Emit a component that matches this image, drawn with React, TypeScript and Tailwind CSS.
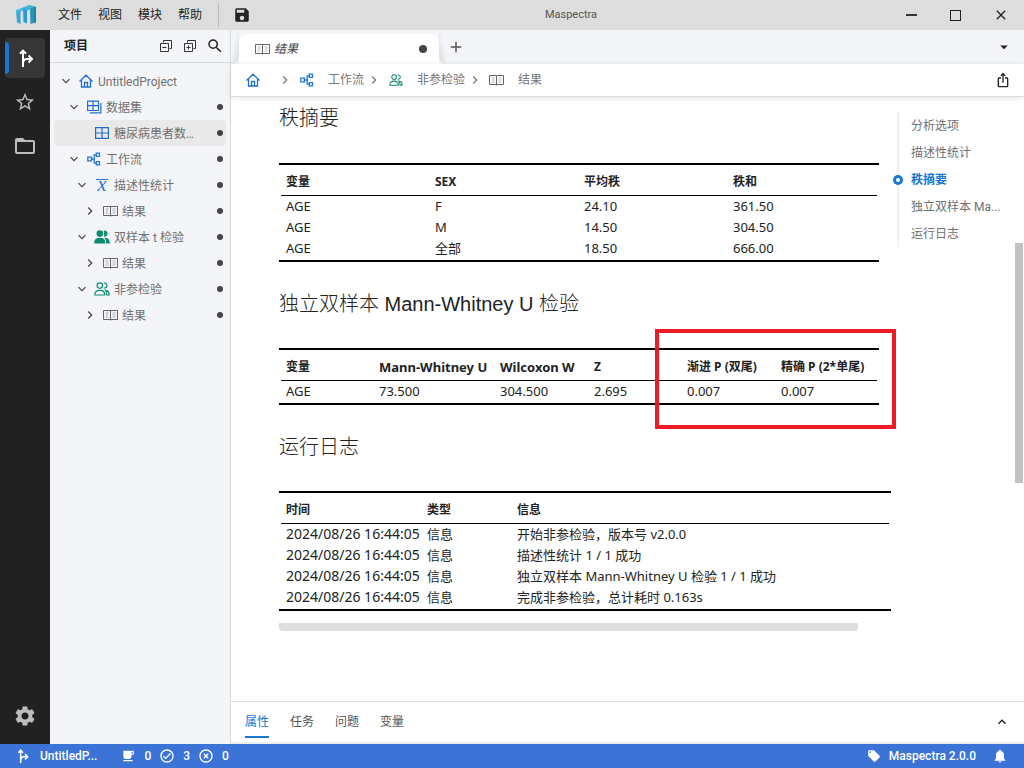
import type { ReactNode } from "react";
import {
  MdArrowDropDown, MdAdd, MdClose, MdExpandLess, MdFolderOpen, MdFreeBreakfast, MdHighlightOff,
  MdIosShare, MdLocalOffer, MdNotifications, MdOutlineCheckCircle, MdSave, MdSearch, MdSettings, MdStarBorder,
} from "react-icons/md";

function Logo() {
  return (
    <svg viewBox="0 0 20 20" className="h-5 w-5">
      <path d="M0 5l4.500 1.200V19L1 17.500z" fill="#35a9dc" />
      <path d="M0 5l7-2.500 4 1.200L4.500 6.800z" fill="#4cbce4" />
      <path d="M7 2.500l4 1.500v14.500L7.500 17z" fill="#2b9bd0" />
      <path d="M7 2.500L13.500 0 19 1.500l-8 4.500z" fill="#43b4d8" />
      <path d="M14 3.500l5-2v16L14.500 19z" fill="#2596b8" />
      <path d="M18.300 1.300l1.700.900v15.300l-1.700 1z" fill="#1d7f9c" />
    </svg>
  );
}

function Branch({ className }: { className: string }) {
  return (
    <svg viewBox="0 0 16 18" className={className} fill="none" stroke="currentColor" strokeWidth="2">
      <path d="M5 18V2M2 4.800L5 1.600l3 3.200M10.500 6.500L14 10l-3.500 3.500" />
      <path d="M5 14.500c0-3 1.500-4.500 4-4.500h4.500" />
    </svg>
  );
}

function House() {
  return (
    <svg viewBox="0 0 14 14" className="h-[14px] w-[14px] shrink-0" fill="none" stroke="#1f6fd0" strokeWidth="1.300">
      <path d="M.5 7.500L7 1.200l6.500 6.300M2.500 6v7h9V6M5.500 13V8.500h3V13" />
    </svg>
  );
}

function Book() {
  return (
    <svg viewBox="0 0 15 12" className="h-3 w-[15px] shrink-0" fill="none" stroke="#666" strokeWidth="1">
      <path d="M7.500 1.500H14.500V10.500H.5V1.500zM7.500 1.500v10" />
      <path d="M2.500 4h3M2.500 6h3M2.500 8h3M9.500 4h3M9.500 6h3M9.500 8h3" opacity=".45" />
    </svg>
  );
}

function Grid() {
  return (
    <svg viewBox="0 0 14 12" className="h-3 w-[14px] shrink-0" fill="none" stroke="#1f6fd0" strokeWidth="1.200">
      <path d="M.6.600h12.800v10.800H.6zM7 .6v10.800M.6 6h12.800" />
    </svg>
  );
}

function Grids() {
  return (
    <svg viewBox="0 0 15 14" className="h-[14px] w-[15px] shrink-0" fill="none" stroke="#1f6fd0" strokeWidth="1.200">
      <path d="M.6 1.100h10.900v9.400H.6zM6 1.100v9.400M.6 5.700h10.900M13.900 3v9.900H3" />
    </svg>
  );
}

function Flow() {
  return (
    <svg viewBox="0 0 14 14" className="h-[14px] w-[14px] shrink-0" fill="none" stroke="#1f76d4" strokeWidth="1.300">
      <path d="M.8 5.200h3.600v3.600H.8zM9.300 1.200h3.200v3.200H9.300zM9.300 9.600h3.200v3.200H9.300zM4.400 7h2.800M9.300 2.800H7.200v8.400h2.100" />
    </svg>
  );
}

function People({ solid, className }: { solid?: boolean; className: string }) {
  return (
    <svg viewBox="0 0 16 14" className={"shrink-0 text-[#0f8a72] " + className} fill={solid ? "currentColor" : "none"} stroke="currentColor" strokeWidth="1.200">
      <circle cx="5.800" cy="3.600" r="2.700" />
      <path d="M.8 13c0-3 1.700-4.700 5-4.700s5 1.700 5 4.700z" />
      <path d="M9.800 1.300a2.400 2.400 0 1 1 .2 4.600M11.500 8.300c2.400.300 3.700 2 3.700 4.700h-2.400c0-2-.5-3.600-1.300-4.700z" />
    </svg>
  );
}

function MeanSign() {
  return (
    <span className="flex h-3 w-3 shrink-0 items-center justify-center border-t border-[#1f76d4] pb-1 font-[Liberation_Serif,serif] text-xl leading-3 text-[#1f76d4] italic">
      x
    </span>
  );
}

function Chevron({ open, className = "" }: { open?: boolean; className?: string }) {
  return (
    <svg viewBox="0 0 10 10" className={"h-[10px] w-[10px] shrink-0 " + className} fill="none" stroke="currentColor" strokeWidth="1.200">
      <path d={open ? "M1.500 3.200L5 6.700l3.500-3.500" : "M3.200 1.500L6.700 5 3.200 8.500"} />
    </svg>
  );
}

function Windows({ plus }: { plus?: boolean }) {
  return (
    <svg viewBox="0 0 14 14" className="h-[14px] w-[14px]" fill="none" stroke="#333">
      <path d="M4.500 3.500v-2h8v8h-2M1.500 4.500h8v8h-8zM3.500 8.500h4" />
      {plus && <path d="M5.500 6.500v4" />}
    </svg>
  );
}

type Node = { label: string; icon: ReactNode; indent: string; open?: boolean; leaf?: boolean; selected?: boolean; clean?: boolean };

const nodes: Node[] = [
  { label: "UntitledProject", icon: <House />, indent: "pl-[7px]", open: true, clean: true },
  { label: "数据集", icon: <Grids />, indent: "pl-[15px]", open: true },
  { label: "糖尿病患者数据集", icon: <Grid />, indent: "pl-[23px]", leaf: true, selected: true },
  { label: "工作流", icon: <Flow />, indent: "pl-[15px]", open: true },
  { label: "描述性统计", icon: <MeanSign />, indent: "pl-[23px]", open: true },
  { label: "结果", icon: <Book />, indent: "pl-[31px]" },
  { label: "双样本 t 检验", icon: <People solid className="h-[14px] w-4" />, indent: "pl-[23px]", open: true },
  { label: "结果", icon: <Book />, indent: "pl-[31px]" },
  { label: "非参检验", icon: <People className="h-[14px] w-4" />, indent: "pl-[23px]", open: true },
  { label: "结果", icon: <Book />, indent: "pl-[31px]" },
];

function Sidebar() {
  return (
    <aside className="flex w-[181px] shrink-0 flex-col border-r border-[#d9dadc] bg-[#f4f5f8]">
      <header className="flex h-[33px] shrink-0 items-center gap-[10px] border-b border-[#d5d7da] pr-[6px] pl-[14px]">
        <h2 className="mr-auto text-xs font-bold text-[#222]">项目</h2>
        <button aria-label="全部折叠"><Windows /></button>
        <button aria-label="全部展开"><Windows plus /></button>
        <button aria-label="搜索" className="-ml-[1px]"><MdSearch className="h-[18px] w-[18px] text-[#222]" /></button>
      </header>
      <ul className="px-1 pt-[5px]">
        {nodes.map((n, i) => (
          <li key={i} className={"flex h-[26px] items-center rounded pr-[3px] " + n.indent + (n.selected ? " bg-[#e9e9e9]" : "")}>
            {n.leaf ? null : <Chevron open={n.open} className="text-[#444]" />}
            <span className={"flex w-4 shrink-0 items-center justify-center " + (n.leaf ? "ml-[17px]" : "ml-[7px]")}>{n.icon}</span>
            <span className="ml-1 min-w-0 flex-1 truncate pt-[2px] pr-5 text-xs text-[#707070]">{n.label}</span>
            {!n.clean && <span className="h-[6px] w-[6px] shrink-0 rounded-full bg-[#444]" />}
          </li>
        ))}
      </ul>
    </aside>
  );
}

const isLatinName = (s: string) => /^[A-Z][a-z]+/.test(s);
const isTimestamp = (s: string) => /^\d{4}\//.test(s);

function ResultTable({ head, rows, cols, className }: { head: string[]; rows: string[][]; cols: string[]; className: string }) {
  return (
    <div className={"border-y-2 border-black px-[2px] pb-[2px] " + className}>
      <table className="w-full table-fixed border-collapse text-left font-['Noto_Sans','Noto_Sans_CJK_SC',sans-serif] text-[#222]">
        <colgroup>{cols.map((c, i) => <col key={i} className={c} />)}</colgroup>
        <thead>
          <tr className="h-[30px] border-b border-black">
            {head.map((h) => (
              <th key={h} className={"pt-1 pl-[5px] leading-4 font-bold whitespace-nowrap " + (isLatinName(h) ? "text-[13px]" : "text-xs")}>{h}</th>
            ))}
          </tr>
        </thead>
        <tbody>
          {rows.map((r, i) => (
            <tr key={i} className="h-[21px]">
              {r.map((c, j) => (
                <td key={j} className={"pl-[5px] leading-5 whitespace-nowrap " + (isTimestamp(c) ? "text-sm" : "text-[13px]")}>{c}</td>
              ))}
            </tr>
          ))}
        </tbody>
      </table>
    </div>
  );
}

function Report() {
  const h = "font-['Liberation_Sans','Noto_Sans_CJK_SC',sans-serif] text-xl leading-6 font-light text-[#222]";
  return (
    <article className="min-w-0 flex-1 pt-[9px] pl-12">
      <h1 className={h}>秩摘要</h1>
      <ResultTable
        className="mt-[33px] w-[600px]"
        cols={["w-1/4", "w-1/4", "w-1/4", "w-1/4"]}
        head={["变量", "SEX", "平均秩", "秩和"]}
        rows={[["AGE", "F", "24.10", "361.50"], ["AGE", "M", "14.50", "304.50"], ["AGE", "全部", "18.50", "666.00"]]}
      />
      <h1 className={"mt-[30px] " + h}>独立双样本 Mann-Whitney U 检验</h1>
      <div className="relative mt-8 w-[600px]">
        <ResultTable
          className="w-full"
          cols={["w-[93px]", "w-[121px]", "w-[94px]", "w-[93px]", "w-[94px]", "w-[101px]"]}
          head={["变量", "Mann-Whitney U", "Wilcoxon W", "Z", "渐进 P (双尾)", "精确 P (2*单尾)"]}
          rows={[["AGE", "73.500", "304.500", "2.695", "0.007", "0.007"]]}
        />
        <div className="absolute -top-[19px] -right-[17px] h-[100px] w-[241px] border-4 border-[#ed1c24]" />
      </div>
      <h1 className={"mt-[30px] " + h}>运行日志</h1>
      <ResultTable
        className="mt-8 w-[612px]"
        cols={["w-[141px]", "w-[90px]", "w-[377px]"]}
        head={["时间", "类型", "信息"]}
        rows={[
          ["2024/08/26 16:44:05", "信息", "开始非参检验，版本号 v2.0.0"],
          ["2024/08/26 16:44:05", "信息", "描述性统计 1 / 1 成功"],
          ["2024/08/26 16:44:05", "信息", "独立双样本 Mann-Whitney U 检验 1 / 1 成功"],
          ["2024/08/26 16:44:05", "信息", "完成非参检验，总计耗时 0.163s"],
        ]}
      />
      <div className="mt-3 h-2 w-[579px] rounded-b-sm bg-[#dedede]" />
    </article>
  );
}

function Outline() {
  const items = ["分析选项", "描述性统计", "秩摘要", "独立双样本 Ma...", "运行日志"];
  return (
    <nav className="mt-[15px] w-[118px] shrink-0 self-start border-l-2 border-[#f0f0f2]">
      {items.map((t, i) => (
        <a key={t} href="#" className={"relative flex h-[27px] items-center pl-3 text-xs whitespace-nowrap " + (i === 2 ? "font-bold text-[#1976d2]" : "text-[#707070]")}>
          {i === 2 && <span className="absolute -left-[6px] h-[10px] w-[10px] rounded-full border-[3px] border-[#1976d2] bg-white" />}
          {t}
        </a>
      ))}
    </nav>
  );
}

export default function App() {
  return (
    <div className="flex h-screen flex-col overflow-hidden bg-white font-['Roboto','Noto_Sans_CJK_SC',sans-serif] text-xs text-[#222]">
      <header className="grid h-[30px] shrink-0 grid-cols-[1fr_auto_1fr] items-center bg-[#ddd]">
        <div className="flex h-full items-center pl-4">
          <Logo />
          <nav className="ml-[22px] flex gap-4">
            {["文件", "视图", "模块", "帮助"].map((m) => <button key={m}>{m}</button>)}
          </nav>
          <span className="ml-4 h-6 w-px bg-[#bbb]" />
          <button aria-label="保存" className="ml-[14px]"><MdSave className="h-[18px] w-[18px]" /></button>
        </div>
        <h1 className="pl-[118px] text-[11px] text-[#555]">Maspectra</h1>
        <div className="flex items-center justify-end gap-[33px] pr-[15px]">
          <button aria-label="最小化" className="h-[2px] w-[11px] bg-[#333]" />
          <button aria-label="最大化" className="h-[11px] w-[11px] border border-[#222]" />
          <button aria-label="关闭" className="-ml-[1px]"><MdClose className="h-4 w-4" /></button>
        </div>
      </header>

      <div className="flex min-h-0 flex-1">
        <nav className="flex w-[50px] shrink-0 flex-col items-center bg-[#212121] pt-2 pb-4 text-[#bdbdbd]">
          <button aria-label="项目" className="flex h-10 w-10 items-center overflow-hidden rounded bg-[#363636] text-white">
            <span className="h-8 w-1 rounded-r bg-[#1976d2]" />
            <Branch className="ml-[9px] h-[18px] w-4" />
          </button>
          <button aria-label="收藏" className="mt-[13px]"><MdStarBorder className="h-[22px] w-[22px]" /></button>
          <button aria-label="文件夹" className="mt-[21px]"><MdFolderOpen className="h-6 w-6" /></button>
          <button aria-label="设置" className="mt-auto"><MdSettings className="h-6 w-6" /></button>
        </nav>

        <Sidebar />

        <main className="flex min-w-0 flex-1 flex-col">
          <div className="flex h-[34px] shrink-0 items-end bg-[#f4f5f8]">
            <span className="h-full w-2 rounded-br-lg bg-gradient-to-tl from-[#d6d7da] to-[#f4f5f8] to-60%" />
            <div className="flex h-[30px] w-[200px] items-center rounded-t-lg bg-white pr-3 pl-4">
              <Book />
              <span className="ml-1 flex-1 text-[#444] italic">结果</span>
              <span className="h-2 w-2 rounded-full bg-[#444]" />
            </div>
            <span className="h-full w-2 rounded-bl-lg bg-gradient-to-tr from-[#d6d7da] to-[#f4f5f8] to-60%" />
            <button aria-label="新建标签" className="mb-2"><MdAdd className="h-[18px] w-[18px] text-[#555]" /></button>
            <button aria-label="标签列表" className="mr-[11px] mb-2 ml-auto"><MdArrowDropDown className="h-[18px] w-[18px]" /></button>
          </div>
          <div className="z-10 flex h-[33px] shrink-0 items-center border-b border-[#ddd] pr-[13px] pl-[15px] text-[#777] shadow-[0_1px_5px_rgba(0,0,0,0.12)]">
            <House />
            <Chevron className="ml-5" />
            <span className="ml-[10px] flex"><Flow /></span>
            <span className="ml-[14px]">工作流</span>
            <Chevron className="ml-[5px]" />
            <People className="ml-[10px] h-[12px] w-[14px]" />
            <span className="ml-[14px]">非参检验</span>
            <Chevron className="ml-[5px]" />
            <span className="ml-[9px] flex"><Book /></span>
            <span className="ml-[14px]">结果</span>
            <button aria-label="分享" className="ml-auto text-[#222]"><MdIosShare className="h-4 w-4" /></button>
          </div>

          <section className="flex min-h-0 flex-1 overflow-hidden">
            <Report />
            <Outline />
            <div className="h-full w-[9px] shrink-0 pt-[146px]">
              <div className="h-[240px] w-2 bg-[#c1c1c1]" />
            </div>
          </section>

          <footer className="flex h-[43px] shrink-0 items-start gap-[21px] border-t border-b-2 border-t-[#ddd] border-b-[#eee] pr-[14px] pl-[14px]">
            {["属性", "任务", "问题", "变量"].map((t, i) => (
              <button key={t} className={"mt-1 h-8 border-b-2 pt-[2px] " + (i === 0 ? "border-[#1976d2] text-[#1976d2]" : "border-transparent text-[#555]")}>{t}</button>
            ))}
            <button aria-label="展开面板" className="mt-3 ml-auto"><MdExpandLess className="h-4 w-4" /></button>
          </footer>
        </main>
      </div>

      <footer className="flex h-6 shrink-0 items-center bg-[#3b73d6] pr-4 pl-4 font-medium text-white">
        <Branch className="h-[14px] w-[14px]" />
        <span className="ml-[10px]">UntitledP...</span>
        <MdFreeBreakfast className="ml-6 h-[14px] w-[14px]" />
        <span className="ml-[9px]">0</span>
        <MdOutlineCheckCircle className="ml-2 h-4 w-4" />
        <span className="ml-2">3</span>
        <MdHighlightOff className="ml-2 h-4 w-4" />
        <span className="ml-2">0</span>
        <MdLocalOffer className="ml-auto h-[14px] w-[14px]" />
        <span className="ml-2">Maspectra 2.0.0</span>
        <MdNotifications className="ml-4 h-4 w-4" />
      </footer>
    </div>
  );
}
